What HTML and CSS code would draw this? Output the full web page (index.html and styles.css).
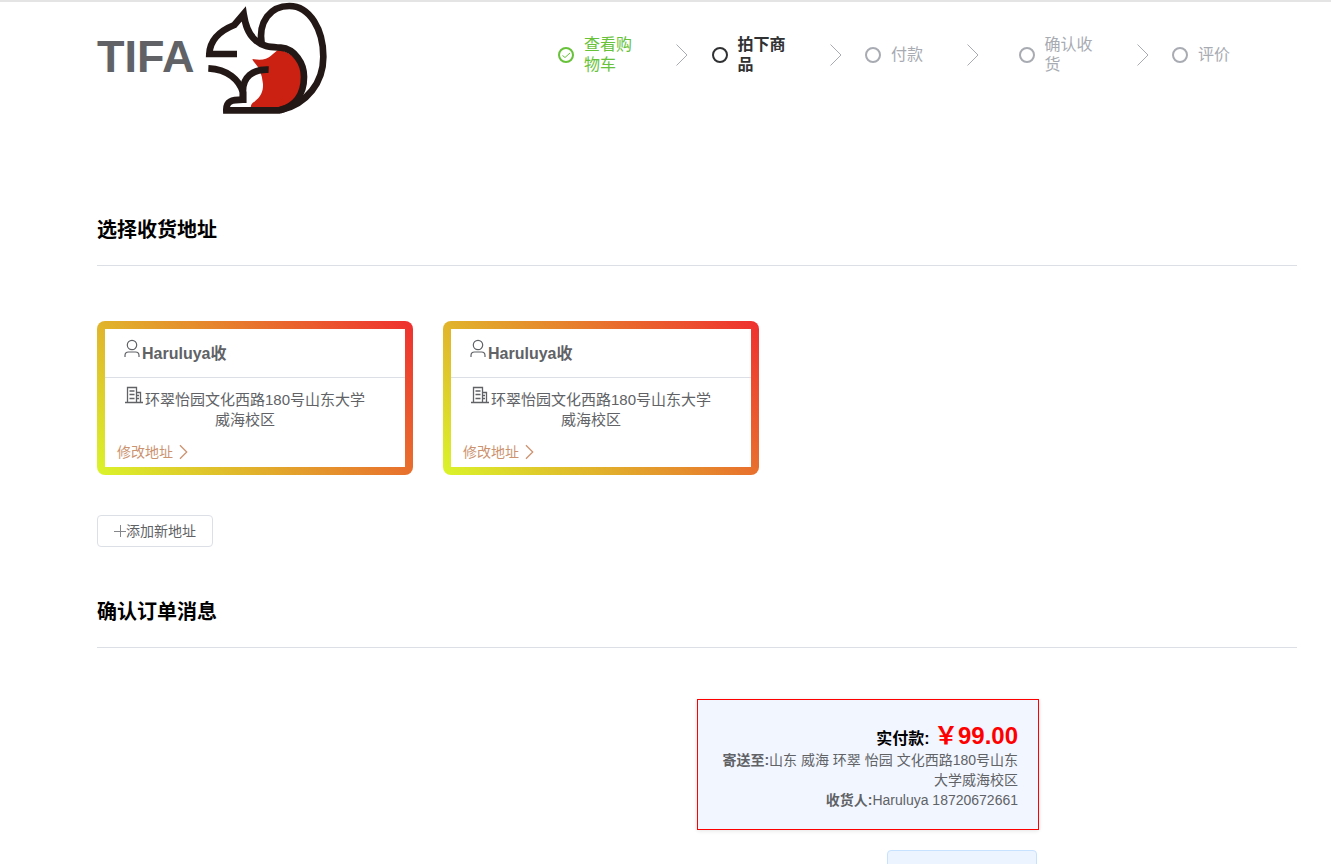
FILE: index.html
```html
<!DOCTYPE html>
<html lang="zh-CN">
<head>
<meta charset="utf-8">
<title>TIFA</title>
<link rel="stylesheet" href="styles.css">
</head>
<body>
<svg class="sprite" aria-hidden="true">
  <symbol id="arrow" viewBox="0 0 14 24"><path d="M1.500 1.500L12 12L1.500 22.500"/></symbol>
  <symbol id="user" viewBox="0 0 18 20"><circle cx="9" cy="6" r="4.700"/><path d="M2 18v-1.500q0-3.500 3.500-3.500h7q3.500 0 3.500 3.500V18"/></symbol>
  <symbol id="building" viewBox="0 0 18 18"><path d="M2.500 16.500V1.500h9v15M11.500 6.500h4v10M0 16.500h18M4.500 5h5M4.500 8.500h5M4.500 12.500h5M12 9.500h2M12 12.500h2"/></symbol>
</svg>
<div class="page">
  <header class="header">
    <div class="brand">
      <span class="brand-name">TIFA</span>
      <svg class="brand-logo" viewBox="0 6 390 339" aria-hidden="true">
        <path class="belly" d="M157 177Q195 184 212 168Q224 158 236 148Q300 165 306 230Q305 300 246 326H153Q150 312 163 305C184 290 190 272 189 252Q187 230 180 213C176 198 161 189 157 177Z"/>
        <path class="outline" d="M111 162H28C30 112 68 89 103 75L131 42C136 74 143 101 166 120C190 142 213 141 242 143C285 147 312 190 312 230C312 284 284 319 238 331H79C78 304 94 299 129 299"/>
        <path class="outline" d="M25 205C84 208 118 240 129 277V309"/>
        <path class="outline" d="M206 209C158 207 127 231 129 277V309"/>
        <path class="outline" d="M185 132C174 64 212 18 268 18C330 18 370 90 370 170C370 246 322 312 240 331"/>
      </svg>
    </div>
    <ol class="steps">
      <li class="step done">
        <svg class="step-icon" viewBox="0 0 16 16"><circle cx="8" cy="8" r="7"/><path class="tick" d="M4.500 8.500L7 10.500L12 6"/></svg>
        <div class="step-main"><span class="step-title">查看购物车</span><span class="step-arrow"><svg><use href="#arrow"/></svg></span></div>
      </li>
      <li class="step current">
        <svg class="step-icon" viewBox="0 0 16 16"><circle cx="8" cy="8" r="7"/></svg>
        <div class="step-main"><span class="step-title">拍下商品</span><span class="step-arrow"><svg><use href="#arrow"/></svg></span></div>
      </li>
      <li class="step">
        <svg class="step-icon" viewBox="0 0 16 16"><circle cx="8" cy="8" r="7"/></svg>
        <div class="step-main"><span class="step-title">付款</span><span class="step-arrow"><svg><use href="#arrow"/></svg></span></div>
      </li>
      <li class="step">
        <svg class="step-icon" viewBox="0 0 16 16"><circle cx="8" cy="8" r="7"/></svg>
        <div class="step-main"><span class="step-title">确认收货</span><span class="step-arrow"><svg><use href="#arrow"/></svg></span></div>
      </li>
      <li class="step last">
        <svg class="step-icon" viewBox="0 0 16 16"><circle cx="8" cy="8" r="7"/></svg>
        <div class="step-main"><span class="step-title">评价</span></div>
      </li>
    </ol>
  </header>

  <main>
    <section class="addresses">
      <h2>选择收货地址</h2>
      <div class="cards">
        <article class="card">
          <div class="card-body">
            <h3 class="card-name"><svg><use href="#user"/></svg>Haruluya收</h3>
            <p class="card-address"><svg><use href="#building"/></svg>环翠怡园文化西路180号山东大学威海校区</p>
            <a class="card-edit" href="#">修改地址<svg><use href="#arrow"/></svg></a>
          </div>
        </article>
        <article class="card">
          <div class="card-body">
            <h3 class="card-name"><svg><use href="#user"/></svg>Haruluya收</h3>
            <p class="card-address"><svg><use href="#building"/></svg>环翠怡园文化西路180号山东大学威海校区</p>
            <a class="card-edit" href="#">修改地址<svg><use href="#arrow"/></svg></a>
          </div>
        </article>
      </div>
      <button class="add" type="button"><svg viewBox="0 0 12 12"><path d="M0 6.500h12M6.500 0v12"/></svg>添加新地址</button>
    </section>

    <section class="order">
      <h2>确认订单消息</h2>
      <div class="checkout">
        <div class="summary">
          <p class="total"><b>实付款:</b> <strong>￥99.00</strong></p>
          <p><b>寄送至:</b>山东 威海 环翠 怡园 文化西路180号山东大学威海校区</p>
          <p><b>收货人:</b>Haruluya 18720672661</p>
        </div>
        <button class="submit" type="button" aria-label="提交订单"></button>
      </div>
    </section>
  </main>
</div>
</body>
</html>
```

FILE: styles.css
```css
* {
  box-sizing: border-box;
}

body {
  margin: 0;
  background: #fff;
  color: #606266;
  font-family: "Liberation Sans", "Noto Sans CJK SC", sans-serif;
  font-size: 14px;
  line-height: 20px;
}

h2, h3, p, ol {
  margin: 0;
  padding: 0;
}

svg {
  fill: none;
  stroke: currentColor;
}

.sprite {
  display: none;
}

.page {
  height: 100vh;
  overflow: hidden;
  padding: 0 34px 0 97px;
  border-top: 2px solid #e4e4e4;
}

.header {
  display: flex;
  align-items: center;
}

.brand {
  flex: 0 0 461px;
  display: flex;
  align-items: center;
}

.brand-name {
  width: 103px;
  padding-bottom: 4px;
  font-size: 45px;
  line-height: 52px;
  font-weight: bold;
}

.brand-logo {
  width: 130px;
  height: 113px;
}

.belly {
  fill: #cb2112;
  stroke: none;
}

.outline {
  stroke: #231815;
  stroke-width: 20;
}

.steps {
  flex: 1;
  display: flex;
  padding: 0 67px 8px 0;
  list-style: none;
  color: #a8abb2;
  font-size: 16px;
}

.step {
  flex: 1;
  display: flex;
  align-items: center;
  gap: 10px;
}

.step.last {
  flex: none;
}

.step.done {
  color: #67c23a;
}

.step.current {
  color: #303133;
  font-weight: bold;
}

.step-icon {
  flex: none;
  width: 16px;
  height: 16px;
  stroke-width: 2;
}

.tick {
  stroke-width: 1;
}

.step-main {
  flex: 1;
  display: flex;
  align-items: center;
}

.step-title {
  max-width: 50%;
}

.last .step-title {
  max-width: none;
}

.step-arrow {
  flex: 1;
  display: flex;
  justify-content: center;
  padding-left: 5px;
  color: #a8abb2;
}

.step-arrow svg {
  width: 14px;
  height: 24px;
}

h2 {
  padding-bottom: 20px;
  border-bottom: 1px solid #dcdfe6;
  color: #000;
  font-size: 20px;
  line-height: 30px;
}

.addresses {
  padding-top: 100px;
}

.cards {
  display: flex;
  flex-wrap: wrap;
  gap: 30px;
  margin-top: 55px;
}

.card {
  width: 316px;
  padding: 8px;
  border-radius: 8px;
  background: linear-gradient(45deg, #daf52a, #ef2f2f);
}

.card-body {
  background: #fff;
  padding-bottom: 5px;
}

.card-name {
  display: flex;
  align-items: center;
  height: 49px;
  padding: 2px 0 0 18px;
  border-bottom: 1px solid #dcdfe6;
  font-size: 16px;
}

.card-name svg {
  width: 18px;
  height: 20px;
  margin: 0 1px 10px 0;
  stroke-width: 1.2;
}

.card-address {
  width: 250px;
  margin-left: 15px;
  padding-top: 12px;
  font-size: 15px;
  text-align: center;
}

.card-address svg {
  width: 18px;
  height: 18px;
  margin: -6px 2px 0 0;
  vertical-align: 1px;
  stroke-width: 1.3;
}

.card-edit {
  display: flex;
  align-items: center;
  margin: 12px 0 0 12px;
  color: #cc9370;
  text-decoration: none;
}

.card-edit svg {
  width: 9px;
  height: 16px;
  margin-left: 6px;
  stroke-width: 2;
}

.add {
  display: flex;
  align-items: center;
  height: 32px;
  margin-top: 40px;
  padding: 0 16px;
  border: 1px solid #dcdfe6;
  border-radius: 4px;
  background: #fff;
  color: #606266;
  font: inherit;
}

.add svg {
  width: 12px;
  height: 12px;
  stroke: #85878b;
}

.order {
  padding-top: 50px;
}

.checkout {
  display: flex;
  flex-direction: column;
  width: 342px;
  margin: 51px 0 0 50%;
}

.summary {
  padding: 28px 20px 19px;
  border: 1px solid #f00;
  background: #f2f6ff;
  box-shadow: 0 1px 4px rgba(0, 0, 0, 0.1);
  text-align: right;
}

.total {
  color: #000;
  font-size: 16px;
  line-height: 22px;
}

.total strong {
  color: #f00;
  font-size: 24px;
  line-height: 16px;
}

.submit {
  align-self: flex-end;
  width: 150px;
  height: 40px;
  margin: 20px 2px 0 0;
  border: 1px solid #c6e2ff;
  border-radius: 4px;
  background: #ecf5ff;
}
```
